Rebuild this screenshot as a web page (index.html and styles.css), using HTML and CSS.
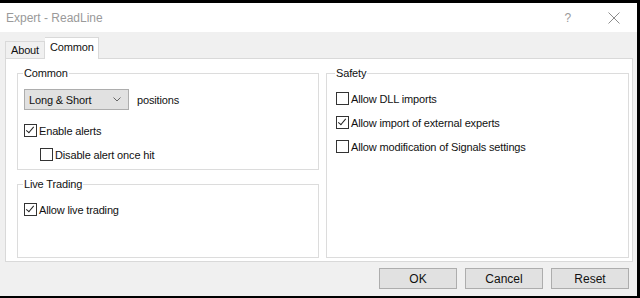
FILE: index.html
```html
<!DOCTYPE html>
<html lang="en">
<head>
  <meta charset="UTF-8">
  <title>Expert - ReadLine</title>
  <link rel="stylesheet" href="styles.css">
</head>
<body>
  <div class="dialog">
    <div class="titlebar">
      <span class="title">Expert - ReadLine</span>
      <span class="help">?</span>
      <svg class="close" width="12" height="12" viewBox="0 0 12 12">
        <path d="M0.5 0.5 L11.5 11.5 M11.5 0.5 L0.5 11.5" stroke="#8c8c8c" stroke-width="1" fill="none"/>
      </svg>
    </div>

    <div class="body">
      <div class="tabs">
        <div class="tab">About</div>
        <div class="tab active">Common</div>
      </div>

      <div class="panel">
        <div class="left-col">
          <fieldset class="group common">
            <legend>Common</legend>
            <div class="pos-row">
              <div class="select">
                <span>Long &amp; Short</span>
                <svg width="8" height="5" viewBox="0 0 8 5">
                  <path d="M0.5 0.5 L4 4 L7.5 0.5" stroke="#666" fill="none"/>
                </svg>
              </div>
              <span>positions</span>
            </div>
            <label class="check first">
              <span class="box checked"></span>Enable alerts
            </label>
            <label class="check sub">
              <span class="box"></span>Disable alert once hit
            </label>
          </fieldset>

          <fieldset class="group live">
            <legend>Live Trading</legend>
            <label class="check first">
              <span class="box checked"></span>Allow live trading
            </label>
          </fieldset>
        </div>

        <fieldset class="group safety">
          <legend>Safety</legend>
          <label class="check first">
            <span class="box"></span>Allow DLL imports
          </label>
          <label class="check">
            <span class="box checked"></span>Allow import of external experts
          </label>
          <label class="check">
            <span class="box"></span>Allow modification of Signals settings
          </label>
        </fieldset>
      </div>

      <div class="buttons">
        <button>OK</button>
        <button>Cancel</button>
        <button>Reset</button>
      </div>
    </div>
  </div>
</body>
</html>
```

FILE: styles.css
```css
body {
  margin: 0;
  background: #000;
  font-family: 'Liberation Sans', Arial, sans-serif;
  font-size: 11px;
  letter-spacing: -0.15px;
  color: #111;
}
.dialog {
  margin-top: 3px;
  width: 637px;
  height: 293px;
  background: #f0f0f0;
}
.titlebar {
  height: 29px;
  background: #fff;
  display: flex;
  align-items: center;
  padding: 0 0 0 6px;
}
.title {
  font-size: 12px;
  letter-spacing: 0;
  color: #9a9a9a;
  flex: 1;
}
.help {
  font-size: 12px;
  color: #9a9a9a;
  margin-right: 37px;
}
.close {
  margin-right: 17px;
}
.body {
  padding: 6px 0 0 5px;
}
.tabs {
  display: flex;
  align-items: flex-end;
  height: 20px;
}
.tab {
  height: 16px;
  line-height: 17px;
  padding: 0 5px;
  border: 1px solid #d9d9d9;
  border-bottom: none;
  background: #f0f0f0;
  width: 28px;
}
.tab.active {
  height: 21px;
  line-height: 18px;
  margin-bottom: -1px;
  background: #fff;
  border-left: none;
  width: 43px;
  position: relative;
  z-index: 1;
}
.panel {
  border: 1px solid #d9d9d9;
  background: #fff;
  display: grid;
  grid-template-columns: 302px 303px;
  column-gap: 7px;
  padding: 7px 0 0 11px;
  width: 615px;
  height: 195px;
}
.left-col {
  display: flex;
  flex-direction: column;
  gap: 7px;
}
.group {
  margin: 0;
  padding: 0 6px;
  border: 1px solid #dcdcdc;
  box-sizing: border-box;
  min-width: 0;
}
.group legend {
  padding: 0 1px;
  margin-left: -1px;
  line-height: 14px;
}
.common { height: 104px; }
.live { height: 81px; }
.safety {
  height: 192px;
  padding-left: 9px;
}
.pos-row {
  display: flex;
  align-items: center;
  gap: 8px;
  margin-top: 9px;
}
.select {
  height: 19px;
  border: 1px solid #adadad;
  background: #e1e1e1;
  display: flex;
  align-items: center;
  justify-content: space-between;
  padding: 0 7px 0 4px;
  width: 92px;
}
.check {
  display: flex;
  align-items: center;
  height: 13px;
  margin-top: 11px;
}
.check.first {
  margin-top: 12px;
}
.common .check.first {
  margin-top: 14px;
}
.check.sub {
  margin-left: 16px;
}
.box {
  width: 11px;
  height: 11px;
  border: 1px solid #333;
  background: #fff;
  margin-right: 2px;
  position: relative;
  flex-shrink: 0;
}
.box.checked::after {
  content: "";
  position: absolute;
  left: 3px;
  top: 0px;
  width: 3px;
  height: 7px;
  border: solid #222;
  border-width: 0 1px 1px 0;
  transform: rotate(40deg);
}
.buttons {
  display: flex;
  justify-content: flex-end;
  gap: 8px;
  padding-right: 8px;
  margin-top: 6px;
}
button {
  width: 78px;
  height: 21px;
  border: 1px solid #adadad;
  background: #e1e1e1;
  font-family: 'Liberation Sans', Arial, sans-serif;
  font-size: 12px;
  color: #111;
  padding: 0;
}
```
